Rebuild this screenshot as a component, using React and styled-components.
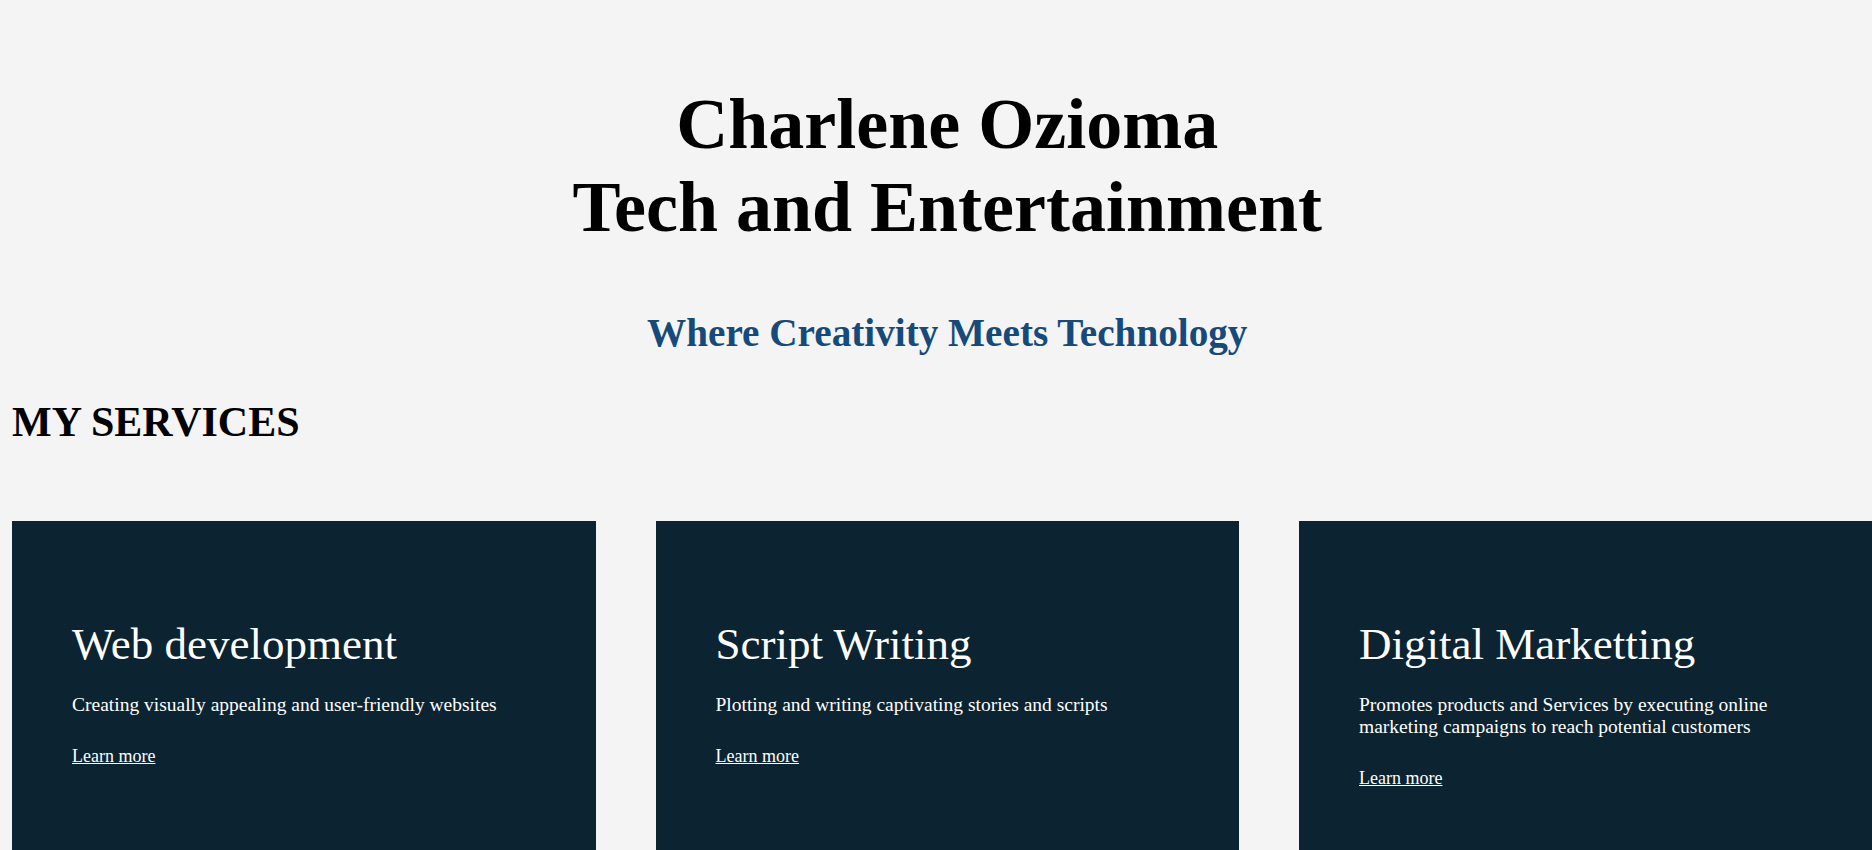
import React from "react";
import styled, { createGlobalStyle } from "styled-components";

const GlobalStyle = createGlobalStyle`
  html, body {
    margin: 0;
    padding: 0;
    background: #f4f4f4;
  }
  body {
    font-family: "Liberation Serif", "Times New Roman", serif;
    color: #000;
    overflow-x: hidden;
  }
`;

const Page = styled.div`
  width: max-content;
  padding: 0 0 0 12px;
`;

const Header = styled.header`
  display: flex;
  flex-direction: column;
  align-items: center;
  text-align: center;
`;

const Title = styled.h1`
  margin: 83px 0 0;
  font-size: 72px;
  font-weight: 700;
  line-height: normal;
`;

const Tagline = styled.h2`
  margin: 61px 0 0;
  font-size: 39.2px;
  font-weight: 700;
  line-height: normal;
  color: #164a7b;
`;

const SectionTitle = styled.h2`
  margin: 43px 0 0;
  font-size: 42px;
  font-weight: 700;
  line-height: normal;
`;

const CardRow = styled.section`
  display: flex;
  gap: 60px;
  margin-top: 75px;
`;

const Card = styled.article`
  flex: 0 0 auto;
  box-sizing: border-box;
  width: 583.5px;
  padding: 60px 60px 90px;
  background: #0c2431;
  color: #fff;
`;

const CardTitle = styled.h3`
  margin: 37px 0 0;
  font-size: 45px;
  font-weight: 400;
  line-height: normal;
`;

const CardText = styled.p`
  margin: 23.5px 0 0;
  font-size: 19.5px;
  line-height: normal;
`;

const CardLink = styled.a`
  display: block;
  margin-top: 30px;
  font-size: 18px;
  line-height: normal;
  color: #fff;
  text-decoration: underline;
  width: max-content;
`;

const services = [
  {
    title: "Web development",
    text: "Creating visually appealing and user-friendly websites",
  },
  {
    title: "Script Writing",
    text: "Plotting and writing captivating stories and scripts",
  },
  {
    title: "Digital Marketting",
    text: "Promotes products and Services by executing online marketing campaigns to reach potential customers",
  },
];

export default function App() {
  return (
    <>
      <GlobalStyle />
      <Page>
        <Header>
          <Title>
            Charlene Ozioma
            <br />
            Tech and Entertainment
          </Title>
          <Tagline>Where Creativity Meets Technology</Tagline>
        </Header>
        <SectionTitle>MY SERVICES</SectionTitle>
        <CardRow>
          {services.map((s) => (
            <Card key={s.title}>
              <CardTitle>{s.title}</CardTitle>
              <CardText>{s.text}</CardText>
              <CardLink href="#">Learn more</CardLink>
            </Card>
          ))}
        </CardRow>
      </Page>
    </>
  );
}
